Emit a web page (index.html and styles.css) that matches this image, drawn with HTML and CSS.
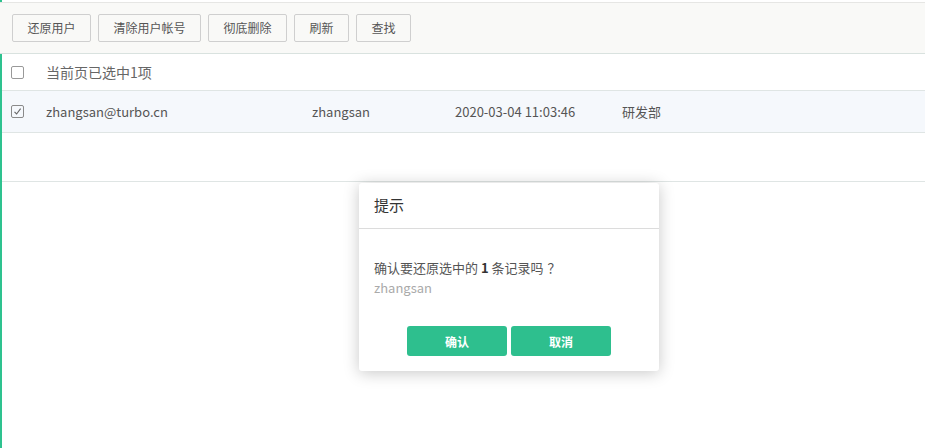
FILE: index.html
```html
<!DOCTYPE html>
<html lang="zh-CN">
<head>
<meta charset="utf-8">
<link rel="stylesheet" href="styles.css">
</head>
<body>
<div class="page">
  <div class="topgap"></div>
  <div class="toolbar">
    <button class="btn">还原用户</button>
    <button class="btn">清除用户帐号</button>
    <button class="btn">彻底删除</button>
    <button class="btn">刷新</button>
    <button class="btn">查找</button>
  </div>
  <div class="row head-row">
    <span class="cb"></span>
    <span class="head-text">当前页已选中1项</span>
  </div>
  <div class="row data-row">
    <span class="cb checked"><svg width="11" height="11" viewBox="0 0 11 11"><path d="M2.5 5.8 L4.6 8 L8.6 2.6" fill="none" stroke="#666" stroke-width="1.1"/></svg></span>
    <span class="col col-email">zhangsan@turbo.cn</span>
    <span class="col col-name">zhangsan</span>
    <span class="col col-date">2020-03-04 11:03:46</span>
    <span class="col col-dept">研发部</span>
  </div>
  <div class="empty-row"></div>
</div>

<div class="dialog">
  <div class="dialog-head">提示</div>
  <div class="dialog-body">
    <div class="msg">确认要还原选中的 <b>1</b> 条记录吗<span class="qm">？</span></div>
    <div class="sub">zhangsan</div>
  </div>
  <div class="dialog-foot">
    <button class="pbtn">确认</button>
    <button class="pbtn">取消</button>
  </div>
</div>
</body>
</html>
```
FILE: styles.css
```css
* { box-sizing: border-box; }
html, body { margin: 0; padding: 0; background: #fff; }
body {
  font-family: "Noto Sans CJK SC", "Noto Sans", sans-serif;
  color: #555;
  width: 925px;
  height: 448px;
  overflow: hidden;
}
.page {
  border-left: 2px solid #2ec28f;
  height: 448px;
}
.topgap { height: 2px; }
.toolbar {
  margin-left: -2px;
  background: #f9f9f7;
  border-top: 1px solid #e6e6e4;
  border-bottom: 1px solid #d9e2df;
  padding: 11px 0 11px 12px;
  display: flex;
  gap: 7px;
}
.btn {
  height: 28px;
  padding: 0 14.5px;
  border: 1px solid #cfcfcf;
  border-radius: 2px;
  background: #f9f9f7;
  color: #555;
  font-family: inherit;
  font-size: 12px;
  line-height: 26px;
}
.row {
  display: flex;
  align-items: center;
  border-bottom: 1px solid #dfe5e4;
  font-size: 13px;
  color: #555;
}
.head-row { height: 37px; }
.data-row { height: 42px; background: #f5f8fc; }
.empty-row { height: 49px; border-bottom: 1px solid #dfe5e4; }
.cb {
  width: 13px;
  height: 13px;
  border: 1px solid #999;
  border-radius: 2px;
  margin-left: 9px;
  margin-right: 22px;
  display: flex;
  align-items: center;
  justify-content: center;
  background: #fff;
}
.checked { background: #f5f8fc; border-color: #8a8a8a; }
.head-text { font-size: 14px; color: #666; }
.col { display: block; }
.col-email { width: 266px; }
.col-name { width: 143px; }
.col-date { width: 167px; }

.dialog {
  position: absolute;
  left: 359px;
  top: 183px;
  width: 300px;
  height: 188px;
  background: #fff;
  border-radius: 3px;
  box-shadow: 0 2px 16px rgba(0,0,0,0.22);
  display: flex;
  flex-direction: column;
}
.dialog-head {
  height: 46px;
  border-bottom: 1px solid #dcdcdc;
  padding-left: 15px;
  font-size: 15px;
  color: #333;
  line-height: 44px;
}
.dialog-body {
  padding: 29px 15px 0;
  height: 97px;
}
.msg { font-size: 13px; color: #555; line-height: 20px; }
.msg b { color: #333; }
.qm { padding-left: 4px; }
.sub { font-size: 13px; color: #aaa; line-height: 20px; }
.dialog-foot {
  display: flex;
  justify-content: center;
  gap: 4px;
}
.pbtn {
  width: 100px;
  height: 30px;
  border: none;
  border-radius: 3px;
  background: #2ebf8e;
  color: #fff;
  font-family: inherit;
  font-size: 12px;
  font-weight: bold;
}
```
